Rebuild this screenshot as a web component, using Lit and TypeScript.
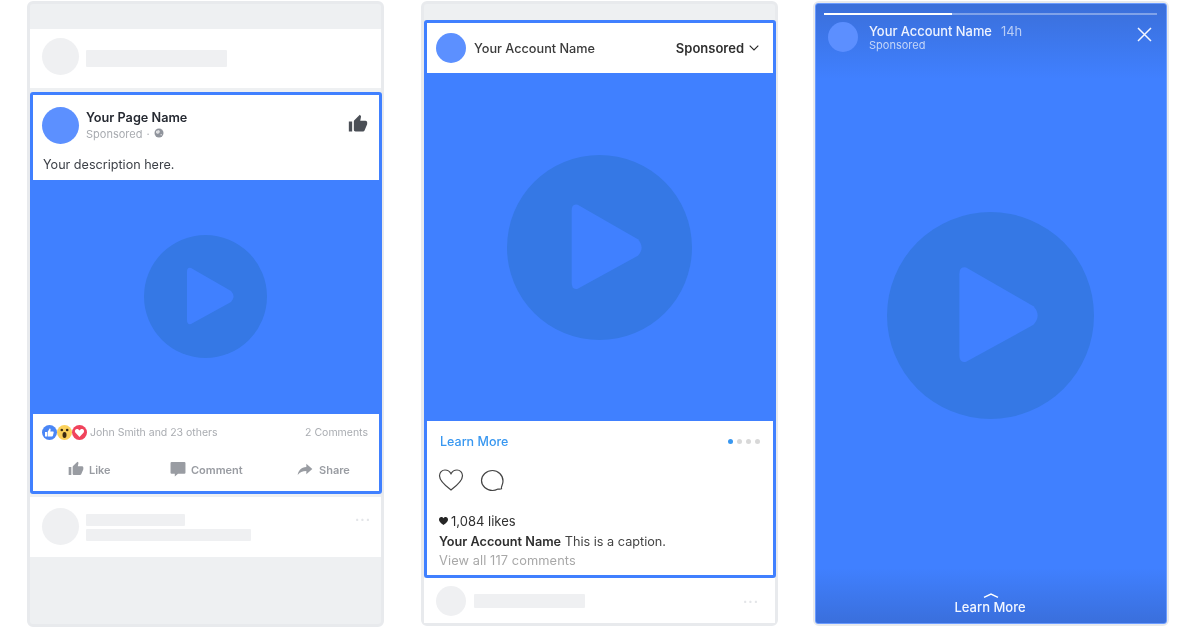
import { LitElement, html, css } from "lit";
import { customElement } from "lit/decorators.js";

const THUMB = "M1 21h4V9H1v12zm22-11c0-1.1-.9-2-2-2h-6.31l.95-4.57.03-.32c0-.41-.17-.79-.44-1.06L14.17 1 7.59 7.59C7.22 7.95 7 8.45 7 9v10c0 1.1.9 2 2 2h9c.83 0 1.54-.5 1.84-1.22l3.02-7.05c.09-.23.14-.47.14-.73v-2z";
const icon = (d: string, cls: string) => html`<svg class=${cls} viewBox="0 0 24 24"><path d=${d} fill="currentColor"></path></svg>`;

const play = (cls: string) => html`<svg class=${cls} viewBox="0 0 123 123">
  <circle cx="61.5" cy="61.5" r="61.5" fill="#3578e5"></circle>
  <path d="M47 33 L87 56 Q92 61.5 87 67 L47 89 Q43 90 43 85 V37 Q43 32 47 33 Z" fill="#4080ff"></path>
</svg>`;

@customElement("app-root")
export class AppRoot extends LitElement {
  static styles = css`
    :host { display: block; width: 1200px; height: 628px; background: #fff; overflow: hidden; font-family: Inter, "Liberation Sans", sans-serif; color: #1d2129; filter: blur(0.45px); }
    * { box-sizing: border-box; }
    .page { display: flex; align-items: flex-start; padding: 1px 0 0 27px; }
    .phone { flex: none; width: 357px; background: #eef0f2; border: 3px solid #e8eaed; border-radius: 6px; display: flex; flex-direction: column; }
    .p1 { height: 626px; padding-top: 25px; }
    .p2 { height: 625px; margin-left: 37px; padding-top: 16px; }
    .p3 { height: 625px; margin-left: 35px; width: 356px; border-width: 2px; background: #e8eaed; }
    .white { background: #fff; display: flex; position: relative; }
    .avatar { flex: none; border-radius: 50%; background: #eff0f2; }
    .bar { background: #eff0f2; border-radius: 1px; }
    .more { color: #e3e5e8; font-size: 13px; line-height: 6px; letter-spacing: 1px; font-weight: 700; }
    .card { border: 3px solid #4080ff; border-radius: 3px; background: #fff; flex: none; display: flex; flex-direction: column; }
    .video { background: #4080ff; display: flex; align-items: center; justify-content: center; flex: none; }

    /* Feed */
    .f-top { height: 59px; padding: 9px 0 0 12px; gap: 7px; }
    .f-top .avatar { width: 37px; height: 37px; }
    .f-top .bar { width: 141px; height: 17px; margin-top: 12px; }
    .f-card { margin: 4px -1px 0 0; height: 402px; width: 352px; }
    .f-head { height: 85px; padding: 12px 11px 0 9px; position: relative; }
    .f-row { display: flex; align-items: flex-start; gap: 7px; }
    .f-row .avatar { width: 37px; height: 37px; background: #5c90ff; }
    .f-names { flex: 1; padding-top: 3px; }
    .f-name { font-size: 12.7px; line-height: 15px; font-weight: 600; color: #262a32; }
    .f-sub { display: flex; align-items: center; gap: 4px; font-size: 11px; line-height: 15px; margin-top: 2px; color: #a8abb0; }
    .globe { width: 10px; height: 10px; color: #90949c; margin-top: -3px; }
    .f-thumb { width: 20px; height: 20px; color: #4b4f56; margin: 7px 0 0; }
    .f-desc { font-size: 12.6px; line-height: 16px; margin-top: 13px; margin-left: 1px; color: #3b3f46; }
    .f-video { height: 234px; }
    .play1 { width: 123px; height: 123px; margin: -2px 0 0 -2px; }
    .f-foot { flex: 1; padding: 11px 11px 0 9px; }
    .f-stats { display: flex; align-items: center; font-size: 10.5px; color: #a9acb1; height: 15px; }
    .emoji { width: 15px; height: 15px; flex: none; margin-right: 0; }
    .f-stats .who { margin-left: 3px; flex: 1; }
    .f-acts { display: flex; margin-top: 20px; height: 20px; color: #999ca2; font-size: 11px; font-weight: 600; }
    .act { display: flex; align-items: center; gap: 5px; }
    .act svg { width: 16px; height: 16px; margin-top: -2px; }
    .a1 { margin-left: 26px; width: 102px; }
    .a2 { width: 127px; }
    .a3 { gap: 6px; }
    .f-bottom { margin-top: 3px; height: 60px; padding: 11px 10px 0 12px; gap: 7px; }
    .f-bottom .avatar { width: 37px; height: 37px; }
    .f-bars { flex: 1; display: flex; flex-direction: column; gap: 3px; padding-top: 6px; }
    .f-bottom .more { margin-top: 8px; }

    /* Instagram */
    .i-card { margin-left: 0; width: 352px; height: 558px; margin-right: -1px; }
    .i-head { height: 50px; display: flex; align-items: center; padding: 0 14px 0 9px; }
    .i-head .avatar { width: 30px; height: 30px; background: #5c90ff; margin-right: 8px; }
    .i-name { flex: 1; font-size: 12.7px; font-weight: 500; color: #3a3a3a; padding-top: 1px; }
    .i-sp { font-size: 13px; font-weight: 600; color: #2f2f2f; margin-top: -1px; }
    .chev { width: 10px; height: 6px; margin-left: 5px; }
    .i-video { height: 348px; }
    .play2 { width: 185px; height: 185px; margin: 0 0 0 -2px; }
    .i-foot { flex: 1; padding: 0 12px; }
    .i-cta { display: flex; justify-content: space-between; align-items: center; height: 38px; color: #3897f0; font-size: 12.5px; font-weight: 500; margin: 1px 0 0 1px; }
    .dots { display: flex; gap: 4px; margin-right: 1px; }
    .dots span { width: 5px; height: 5px; border-radius: 50%; background: #d8d8d8; }
    .dots span:first-child { background: #3897f0; }
    .i-icons { display: flex; gap: 15px; margin: 8px 0 0 -1px; height: 24px; }
    .i-icons svg { height: 24px; width: 26px; }
    .i-likes { display: flex; align-items: center; gap: 3px; font-size: 13px; line-height: 19px; margin-top: 20px; color: #2f2f2f; }
    .i-likes svg { width: 9px; height: 8px; margin-top: -2px; }
    .i-cap { font-size: 12.7px; line-height: 19px; color: #444; margin-top: 1px; }
    .i-cap b { font-weight: 600; color: #2f2f2f; }
    .i-all { font-size: 12.8px; letter-spacing: .1px; line-height: 19px; color: #a8a8a8; }
    .i-bottom { flex: 1; align-items: center; padding: 0 16px 0 12px; gap: 8px; margin: 0 0 0 0; }
    .i-bottom .avatar { width: 30px; height: 30px; }
    .i-bottom .bar { width: 111px; height: 14px; }
    .i-bottom .sp { flex: 1; }

    /* Story */
    .story { flex: 1; margin-bottom: 0; border-radius: 3px; border: 1px solid #6a9bff; display: flex; flex-direction: column; align-items: center; background: linear-gradient(#3b6fd9 0, #3d78ee 40px, #4080ff 75px, #4080ff calc(100% - 55px), #3a6fdc 100%); color: #fff; }
    .track { align-self: stretch; height: 2px; margin: 9px 9px 0 8px; background: rgba(255,255,255,.35); }
    .track div { width: 128px; height: 100%; background: #fff; }
    .s-head { align-self: stretch; display: flex; padding: 7px 14px 0 12px; }
    .s-head .avatar { width: 30px; height: 30px; background: #5c8fff; margin-right: 11px; }
    .s-text { flex: 1; padding-top: 2px; }
    .s-name { font-size: 12.9px; line-height: 15px; font-weight: 500; color: #eef3ff; }
    .s-time { margin-left: 9px; font-weight: 400; color: #b9cdf6; }
    .s-sub { font-size: 11px; line-height: 13px; color: #c5d6f8; }
    .close { width: 15px; height: 15px; margin-top: 5px; }
    .play3 { width: 207px; height: 207px; margin: 160px 0 0 -2px; }
    .s-up { width: 16px; height: 5px; margin-top: 174px; }
    .s-cta { font-size: 13px; line-height: 15px; font-weight: 500; margin-top: 2px; margin-right: 2px; color: #f2f6ff; }
  `;

  render() {
    return html`<div class="page">
      <section class="phone p1">
        <div class="white f-top"><div class="avatar"></div><div class="bar"></div></div>
        <div class="card f-card">
          <div class="f-head">
            <div class="f-row">
              <div class="avatar"></div>
              <div class="f-names">
                <div class="f-name">Your Page Name</div>
                <div class="f-sub"><span>Sponsored</span><span>·</span>
                  <svg class="globe" viewBox="0 0 10 10"><circle cx="5" cy="5" r="4.5" fill="currentColor"></circle><path d="M2 3 L5 2 L6 4 L4 6 L2 5Z M6.500 6 L8 6 L7 8Z" fill="#fff" opacity=".7"></path></svg>
                </div>
              </div>
              ${icon(THUMB, "f-thumb")}
            </div>
            <div class="f-desc">Your description here.</div>
          </div>
          <div class="video f-video">${play("play1")}</div>
          <div class="f-foot">
            <div class="f-stats">
              <svg class="emoji" viewBox="0 0 15 15"><circle cx="7.5" cy="7.5" r="7.500" fill="#4a86f5"></circle><path d="M3 7h2v4.500H3zM5.600 7l2-3.500c.8 0 1.200.6 1 1.400L8.300 6.400h2.500c.6 0 1 .5.9 1l-.8 3.400c-.1.500-.5.700-1 .7H5.600z" fill="#fff"></path></svg>
              <svg class="emoji" viewBox="0 0 15 15"><circle cx="7.500" cy="7.500" r="7.500" fill="#fbd15b"></circle><circle cx="4.800" cy="5" r="1.300" fill="#3a2a12"></circle><circle cx="10.200" cy="5" r="1.300" fill="#3a2a12"></circle><ellipse cx="7.500" cy="10" rx="2" ry="3" fill="#3a2a12"></ellipse></svg>
              <svg class="emoji" viewBox="0 0 15 15"><circle cx="7.500" cy="7.500" r="7.500" fill="#f0435c"></circle><path d="M7.500 12 L3.300 7.600 C2.300 6 3.300 4 5 4 C6.200 4 7 4.700 7.500 5.400 C8 4.700 8.800 4 10 4 C11.700 4 12.700 6 11.700 7.600Z" fill="#fff"></path></svg>
              <span class="who">John Smith and 23 others</span>
              <span>2 Comments</span>
            </div>
            <div class="f-acts">
              <div class="act a1">${icon(THUMB, "")}<span>Like</span></div>
              <div class="act a2"><svg viewBox="0 0 15 15"><path d="M1.500 1h12a1 1 0 0 1 1 1v9a1 1 0 0 1-1 1H7.500L4.500 14.500V12h-3a1 1 0 0 1-1-1V2a1 1 0 0 1 1-1z" fill="currentColor"></path></svg><span>Comment</span></div>
              <div class="act a3">${icon("M14 9V4l9 8-9 8v-5c-6 0-10 1.600-13 6 1-6 5-11.500 13-12z", "")}<span>Share</span></div>
            </div>
          </div>
        </div>
        <div class="white f-bottom">
          <div class="avatar"></div>
          <div class="f-bars">
            <div class="bar" style="width:99px;height:12px"></div>
            <div class="bar" style="width:165px;height:12px"></div>
          </div>
          <div class="more">···</div>
        </div>
      </section>

      <section class="phone p2">
        <div class="card i-card">
          <div class="i-head">
            <div class="avatar"></div>
            <div class="i-name">Your Account Name</div>
            <div class="i-sp">Sponsored</div>
            <svg class="chev" viewBox="0 0 10 6"><path d="M.7.7 5 5 9.300.7" fill="none" stroke="#262626" stroke-width="1.100"></path></svg>
          </div>
          <div class="video i-video">${play("play2")}</div>
          <div class="i-foot">
            <div class="i-cta"><span>Learn More</span><div class="dots"><span></span><span></span><span></span><span></span></div></div>
            <div class="i-icons">
              <svg viewBox="0 0 26 24"><path d="M13 22 C9 19 1.500 13.500 1.500 7.800 C1.500 4.500 4 2 7 2 C9.500 2 11.800 3.500 13 5.800 C14.200 3.500 16.500 2 19 2 C22 2 24.500 4.500 24.500 7.800 C24.500 13.500 17 19 13 22Z" fill="none" stroke="#444" stroke-width="1.200"></path></svg>
              <svg viewBox="0 0 26 24"><path d="M22.500 20.800 C22 19.800 22.300 19 23 17.500 C23.700 16 24 14.500 24 13 C24 7 19 2.500 13.500 2.500 C7.500 2.500 2.500 7 2.500 12.500 C2.500 18 7.500 22.500 13.500 22.500 C15.500 22.500 17.500 21.800 19 21 C20 21 21.500 21.300 22.500 20.800Z" fill="none" stroke="#444" stroke-width="1.200"></path></svg>
            </div>
            <div class="i-likes"><svg viewBox="0 0 9 8"><path d="M4.500 8 C3 6.800 0 5 0 2.400 C0 1 1 0 2.300 0 C3.200 0 4 .5 4.500 1.200 C5 .5 5.800 0 6.700 0 C8 0 9 1 9 2.400 C9 5 6 6.800 4.500 8Z" fill="#262626"></path></svg><span>1,084 likes</span></div>
            <div class="i-cap"><b>Your Account Name</b> This is a caption.</div>
            <div class="i-all">View all 117 comments</div>
          </div>
        </div>
        <div class="white i-bottom">
          <div class="avatar"></div>
          <div class="bar"></div>
          <div class="sp"></div>
          <div class="more">···</div>
        </div>
      </section>

      <section class="phone p3">
        <div class="story">
          <div class="track"><div></div></div>
          <div class="s-head">
            <div class="avatar"></div>
            <div class="s-text">
              <div class="s-name">Your Account Name<span class="s-time">14h</span></div>
              <div class="s-sub">Sponsored</div>
            </div>
            <svg class="close" viewBox="0 0 15 15"><path d="M1 1 14 14M14 1 1 14" stroke="#f4f7ff" stroke-width="1.500" fill="none"></path></svg>
          </div>
          ${play("play3")}
          <svg class="s-up" viewBox="0 0 16 5"><path d="M1 4.300 8 1l7 3.300" fill="none" stroke="#fff" stroke-width="1.400"></path></svg>
          <div class="s-cta">Learn More</div>
        </div>
      </section>
    </div>`;
  }
}
